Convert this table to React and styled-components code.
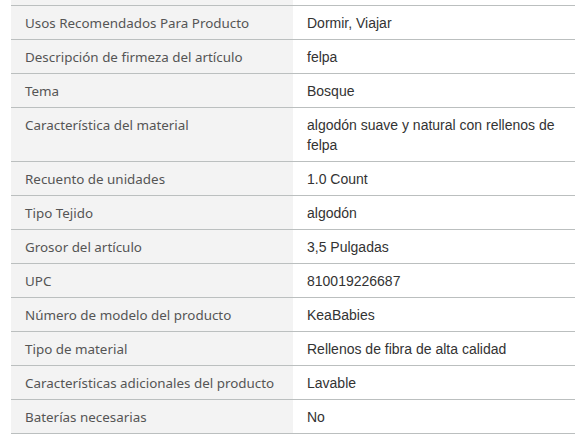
import styled, { createGlobalStyle } from "styled-components";

const GlobalStyle = createGlobalStyle`
  html, body {
    margin: 0;
    padding: 0;
    background: #fff;
  }
`;

const Page = styled.div`
  padding: 0 10px 0 11px;
`;

const Table = styled.div`
  width: 564px;
  display: grid;
  grid-template-columns: 282px 282px;
  border-bottom: 1px solid #bbbfbf;
`;

const Row = styled.div`
  display: contents;
`;

const Cell = styled.div`
  border-top: ${(props) => (props.$noBorder ? "none" : "1px solid #bbbfbf")};
  padding: ${(props) => (props.$spacer ? "0" : "7px 14px 6px 14px")};
  height: ${(props) => (props.$spacer ? "5px" : "auto")};
  line-height: 20px;
  font-size: 14px;
`;

const Label = styled(Cell)`
  background: #f3f3f3;
  color: #555;
  font-family: "Noto Sans", "Open Sans", sans-serif;
  font-size: 13.4px;
`;

const Value = styled(Cell)`
  background: #fff;
  color: #333;
  font-family: "Liberation Sans", Arial, sans-serif;
`;

const specs = [
  ["Usos Recomendados Para Producto", "Dormir, Viajar"],
  ["Descripción de firmeza del artículo", "felpa"],
  ["Tema", "Bosque"],
  ["Característica del material", "algodón suave y natural con rellenos de felpa"],
  ["Recuento de unidades", "1.0 Count"],
  ["Tipo Tejido", "algodón"],
  ["Grosor del artículo", "3,5 Pulgadas"],
  ["UPC", "810019226687"],
  ["Número de modelo del producto", "KeaBabies"],
  ["Tipo de material", "Rellenos de fibra de alta calidad"],
  ["Características adicionales del producto", "Lavable"],
  ["Baterías necesarias", "No"],
];

export default function App() {
  return (
    <>
      <GlobalStyle />
      <Page>
        <Table role="table">
          <Row>
            <Label $spacer $noBorder />
            <Value $spacer $noBorder />
          </Row>
          {specs.map(([k, v]) => (
            <Row key={k} role="row">
              <Label>{k}</Label>
              <Value>{v}</Value>
            </Row>
          ))}
        </Table>
      </Page>
    </>
  );
}
